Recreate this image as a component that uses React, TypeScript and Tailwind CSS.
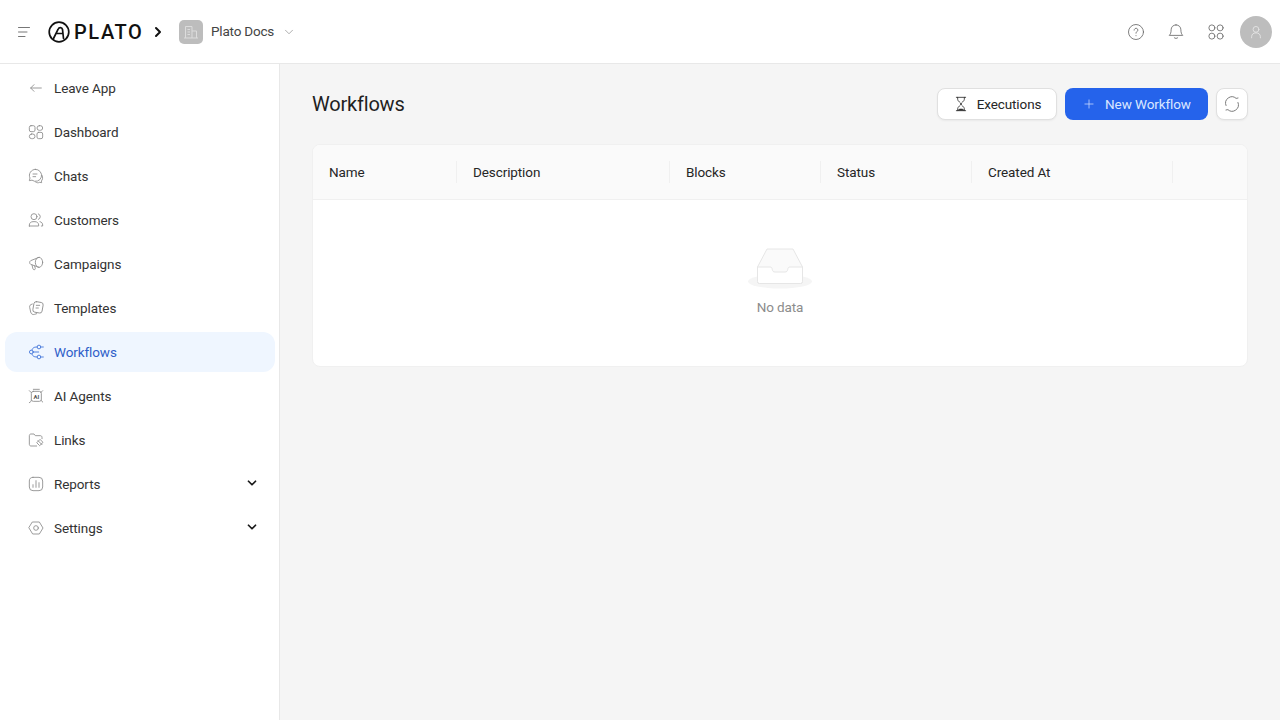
import type { ReactNode } from "react";
import { ChevronDown, ChevronRight, Plus } from "lucide-react";

function Ico({ children, size = 16, color = "#8c8c8c", sw = 1.3 }: { children: ReactNode; size?: number; color?: string; sw?: number }) {
  return (
    <svg width={size} height={size} viewBox="0 0 24 24" fill="none" stroke={color} strokeWidth={sw} strokeLinecap="round" strokeLinejoin="round" className="shrink-0">
      {children}
    </svg>
  );
}

const navItems: { name: string; icon: ReactNode; active?: boolean; caret?: boolean }[] = [
  { name: "Leave App", icon: <><path d="M20 12H4" /><path d="M9 7l-5 5 5 5" /></> },
  { name: "Dashboard", icon: <><rect x="2" y="2.500" width="8.500" height="9" rx="2.500" /><rect x="13.500" y="2.500" width="8.500" height="7" rx="3.500" /><rect x="2" y="15" width="8.500" height="7" rx="3.500" /><rect x="13.500" y="12.500" width="8.500" height="9.500" rx="2.500" /></> },
  { name: "Chats", icon: <><path d="M11 2a9 9 0 0 0-8 13l-1 4 4-.8A9 9 0 1 0 11 2z" /><path d="M7.500 9h6M7.500 13h4" /><path d="M21 11c2 4 .5 7-1 8.500l.5 2.500-3-.5c-2 1-4 .9-6-.3" /></> },
  { name: "Customers", icon: <><circle cx="9" cy="7" r="4.500" /><path d="M2 21v-1.500c0-3 2.500-5 5.500-5h3c3 0 5.500 2 5.500 5V21H2z" /><path d="M15.500 2.800a4.500 4.500 0 0 1 0 8.400" /><path d="M18 14.500c2.500.5 4 2.500 4 5V21h-2" /></> },
  { name: "Campaigns", icon: <><ellipse cx="16.500" cy="9.500" rx="5.500" ry="7.500" /><path d="M16.500 2 4 7C2 8 2 11.500 4 12.500L16.500 17" /><path d="M6 13.500l1.500 6c.4 1.500 3.500 1.500 3.500-.5L10 15" /></> },
  { name: "Templates", icon: <><rect x="8" y="3" width="14" height="16" rx="3.500" transform="rotate(10 15 11)" /><path d="M12.500 8h5M12 12h3.500" /><path d="M6.500 6C3 7 2 8.500 2.500 11l1.500 7c.6 3 3 4.500 6 3.500l3-1" /></> },
  { name: "Workflows", active: true, icon: <><circle cx="16.500" cy="4.500" r="2.800" /><circle cx="16.500" cy="19.500" r="2.800" /><circle cx="5" cy="12" r="2.800" /><path d="M13.500 4.500C8 4.500 7 6 6 9.200M6 14.800c1 3.200 2 4.700 7.500 4.700M8 12h8M21 4.500h2M21 19.500h2" /></> },
  { name: "AI Agents", icon: <><rect x="5" y="5" width="15" height="15" rx="3" /><path d="M2 4l3 3M22 4l-3 3M2 22c2-1 3-2 3-4M22 21c-2-1-2-2-2-3M8 2h9" /><text x="12.500" y="16" fontSize="9" fontWeight="700" textAnchor="middle" fill="#555555" stroke="none">AI</text></> },
  { name: "Links", icon: <><path d="M21 10V8c0-1.500-1-2.500-2.500-2.500H11L9 3H4.500C3 3 2 4 2 5.500v13C2 20 3 21 4.500 21H13" /><path d="M15 13l6 6M18.500 11.500l4 4-5 5-4-4z" /></> },
  { name: "Reports", caret: true, icon: <><rect x="2" y="2" width="20" height="20" rx="5.500" /><path d="M7.500 17v-4M12 17V7M16.500 17v-7" /></> },
  { name: "Settings", caret: true, icon: <><path d="M7 3h10l5.500 9-5.500 9H7l-5.500-9z" /><circle cx="12" cy="12" r="3.500" /></> },
];

const columns = [
  { name: "Name", w: "w-[144px]" },
  { name: "Description", w: "w-[213px]" },
  { name: "Blocks", w: "w-[151px]" },
  { name: "Status", w: "w-[151px]" },
  { name: "Created At", w: "w-[201px]" },
];

function Sidebar() {
  return (
    <aside className="w-[280px] shrink-0 bg-white border-r border-[#e8e8e8] pt-1 px-[5px] flex flex-col gap-1">
      {navItems.map((item) => (
        <div
          key={item.name}
          className={`h-10 w-[270px] rounded-xl flex items-center pl-[23px] pr-4 ${item.active ? "bg-[#eff6ff] text-[#2f5fc9]" : "text-[#333333]"}`}
        >
          <Ico color={item.active ? "#3b6fd8" : "#8c8c8c"}>{item.icon}</Ico>
          <span className="ml-[10px] flex-1">{item.name}</span>
          {item.caret && <ChevronDown size={14} strokeWidth={3} color="#1a1a1a" className="-mt-0.5" />}
        </div>
      ))}
    </aside>
  );
}

function Header() {
  return (
    <header className="h-16 shrink-0 bg-white border-b border-[#e8e8e8] flex items-center pl-[18px] pr-2">
      <svg width="12" height="12" viewBox="0 0 12 12" stroke="#777777" strokeWidth="1" strokeLinecap="round" className="shrink-0">
        <path d="M.5 1.500h11M.5 6h8.500M.5 10.500h6.500" />
      </svg>
      <svg width="22" height="22" viewBox="0 0 22 22" fill="none" stroke="#111111" strokeWidth="1.700" strokeLinecap="round" className="ml-[18px] shrink-0">
        <circle cx="11" cy="11" r="9.800" />
        <path d="M5.500 17.500 10 8.500c1-2.500 4-2.500 4.500 0l1 9M9 12.500h5" />
      </svg>
      <span className="ml-1 w-[70px] text-[20px] leading-none font-medium tracking-[1.600px] text-[#111111]">PLATO</span>
      <ChevronRight size={16} strokeWidth={3} color="#111111" className="ml-[6px]" />
      <div className="ml-[13px] w-6 h-6 rounded-[5px] bg-[#bdbdbd] flex items-center justify-center">
        <svg width="16" height="16" viewBox="0 0 16 16" fill="none" stroke="#dcdcdc" strokeWidth="1">
          <path d="M2.500 14V2.500h6.500V14M9 7h4.500v7M1 14h14M4.500 5.500h2.500M4.500 8h2.500M4.500 10.500h2.500" />
        </svg>
      </div>
      <span className="ml-2 w-[62px] whitespace-nowrap text-[#444444] tracking-[-0.2px]">Plato Docs</span>
      <ChevronDown size={14} strokeWidth={1.2} color="#8c8c8c" className="ml-[9px]" />
      <div className="ml-auto flex items-center">
        <Ico size={18} color="#666666" sw={1.1}>
          <circle cx="12" cy="12" r="10" />
          <path d="M9.500 9.500a2.500 2.500 0 1 1 3.800 2.100c-.8.500-1.300 1-1.300 2" />
          <path d="M12 16.800v.2" />
        </Ico>
        <div className="ml-[22px]">
          <Ico size={18} color="#666666" sw={1.1}>
            <path d="M12 2.500c-4 0-6.500 3-6.500 6.500 0 4-1 6-2.500 7.500h18c-1.500-1.500-2.500-3.500-2.500-7.500 0-3.500-2.500-6.500-6.500-6.500z" />
            <path d="M9.500 19.500c.8 1.500 4.200 1.500 5 0" />
          </Ico>
        </div>
        <div className="ml-[22px]">
          <Ico size={18} color="#666666" sw={1.1}>
            <circle cx="6.500" cy="6.500" r="4" />
            <circle cx="17.500" cy="6.500" r="4" />
            <circle cx="6.500" cy="17.500" r="4" />
            <circle cx="17.500" cy="17.500" r="4" />
          </Ico>
        </div>
        <div className="ml-[15px] w-8 h-8 rounded-full bg-[#bdbdbd] flex items-center justify-center">
          <Ico size={14} color="#e6e6e6" sw={1.5}>
            <circle cx="12" cy="7.500" r="5" />
            <path d="M4.500 22v-2c0-4 3-6.500 7.500-6.500s7.500 2.500 7.500 6.500v2" />
          </Ico>
        </div>
      </div>
    </header>
  );
}

function EmptyIcon() {
  return (
    <svg width="64" height="41" viewBox="0 0 64 41" fill="none" className="shrink-0">
      <ellipse cx="32" cy="33.500" rx="32" ry="7" fill="#f5f5f5" />
      <path d="M9.500 19 19 1h26l9.500 18v14.500a2 2 0 0 1-2 2h-41a2 2 0 0 1-2-2z" fill="#fafafa" stroke="#e6e6e6" />
      <path d="M9.500 19H22c1.500 0 2 .8 2.300 2.500.3 1.700 1 2.500 2.700 2.500h10c1.700 0 2.400-.8 2.700-2.500.3-1.700.8-2.500 2.300-2.500h12.500v14.500a2 2 0 0 1-2 2h-41a2 2 0 0 1-2-2z" fill="#ffffff" stroke="#e6e6e6" />
    </svg>
  );
}

export default function App() {
  return (
    <div className="h-[720px] w-[1280px] flex flex-col overflow-hidden bg-[#f5f5f5] text-[13.5px] tracking-[-0.1px] font-['Roboto',sans-serif]">
      <Header />
      <div className="flex flex-1 min-h-0">
        <Sidebar />
        <main className="flex-1 px-8 pt-6">
          <div className="flex items-center justify-between h-8">
            <h1 className="text-[20px] font-[450] tracking-[-0.2px] text-[#1f1f1f]">Workflows</h1>
            <div className="flex items-center gap-2">
              <button className="h-8 w-[120px] rounded-lg bg-white border border-[#e0e0e0] shadow-xs flex items-center justify-center gap-2 text-[#262626]">
                <Ico size={16} color="#333333" sw={1.3}>
                  <path d="M5 2h14M5 22h14M7 2v3c0 3 5 5 5 7s-5 4-5 7v3M17 2v3c0 3-5 5-5 7s5 4 5 7v3" />
                  <path d="M8 21c1-2 7-2 8 0z" fill="#333333" />
                </Ico>
                Executions
              </button>
              <button className="h-8 w-[143px] rounded-lg bg-[#2563eb] text-[#dbe7ff] flex items-center justify-center gap-[9px]">
                <Plus size={14} strokeWidth={1.2} />
                New Workflow
              </button>
              <button className="h-8 w-8 rounded-lg bg-white border border-[#e0e0e0] shadow-xs flex items-center justify-center">
                <Ico size={18} color="#777777" sw={1.3}>
                  <path d="M4 14a8.500 8.500 0 0 1 13.500-9.500L20 4" />
                  <path d="M20 10a8.500 8.500 0 0 1-13.500 9.500L4 20" />
                </Ico>
              </button>
            </div>
          </div>
          <section className="mt-6 bg-white rounded-lg border border-[#f0f0f0] overflow-hidden h-[223px]">
            <div className="h-[55px] bg-[#fafafa] border-b border-[#f0f0f0] flex items-center font-[450] text-[#262626]">
              {columns.map((col) => (
                <div key={col.name} className={`${col.w} h-[22px] flex items-center pl-4 border-r border-[#f0f0f0]`}>
                  {col.name}
                </div>
              ))}
            </div>
            <div className="flex flex-col items-center pt-[48px]">
              <EmptyIcon />
              <span className="mt-2 text-[#8c8c8c]">No data</span>
            </div>
          </section>
        </main>
      </div>
    </div>
  );
}
